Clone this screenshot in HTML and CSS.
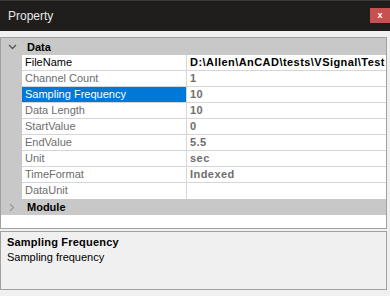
FILE: index.html
```html
<!DOCTYPE html>
<html>
<head>
    <meta charset="UTF-8">
    <title>Property</title>
    <link rel="stylesheet" href="styles.css">
</head>
<body>
    <div class="window">
        <!-- 标题栏 -->
        <div class="titlebar">
            <span class="title">Property</span>
            <span class="close">x</span>
        </div>
        <div class="toolbar"></div>

        <!-- 属性表 -->
        <div class="grid">
            <div class="category">
                <span class="chevron">
                    <svg width="9" height="6" viewBox="0 0 9 6"><path d="M1 1 L4.5 4.5 L8 1" fill="none" stroke="#555" stroke-width="1.3"/></svg>
                </span>
                <span class="cat-name">Data</span>
            </div>
            <div class="row">
                <div class="margin"></div>
                <div class="name editable">FileName</div>
                <div class="value editable">D:\Allen\AnCAD\tests\VSignal\Test</div>
            </div>
            <div class="row">
                <div class="margin"></div>
                <div class="name">Channel Count</div>
                <div class="value">1</div>
            </div>
            <div class="row">
                <div class="margin"></div>
                <div class="name selected">Sampling Frequency</div>
                <div class="value">10</div>
            </div>
            <div class="row">
                <div class="margin"></div>
                <div class="name">Data Length</div>
                <div class="value">10</div>
            </div>
            <div class="row">
                <div class="margin"></div>
                <div class="name">StartValue</div>
                <div class="value">0</div>
            </div>
            <div class="row">
                <div class="margin"></div>
                <div class="name">EndValue</div>
                <div class="value">5.5</div>
            </div>
            <div class="row">
                <div class="margin"></div>
                <div class="name">Unit</div>
                <div class="value">sec</div>
            </div>
            <div class="row">
                <div class="margin"></div>
                <div class="name">TimeFormat</div>
                <div class="value">Indexed</div>
            </div>
            <div class="row last">
                <div class="margin"></div>
                <div class="name">DataUnit</div>
                <div class="value"></div>
            </div>
            <div class="category module">
                <span class="chevron">
                    <svg width="6" height="9" viewBox="0 0 6 9"><path d="M1 1 L4.5 4.5 L1 8" fill="none" stroke="#9a9a9a" stroke-width="1.3"/></svg>
                </span>
                <span class="cat-name">Module</span>
            </div>
        </div>

        <!-- 说明区 -->
        <div class="help">
            <div class="help-title">Sampling Frequency</div>
            <div class="help-text">Sampling frequency</div>
        </div>
    </div>
</body>
</html>
```

FILE: styles.css
```css
body {
    margin: 0;
    background: #f0f0f0;
    font-family: "Liberation Sans", Arial, sans-serif;
    font-size: 11px;
}
.window {
    width: 390px;
    height: 296px;
    overflow: hidden;
}
.titlebar {
    height: 31px;
    background: #1f1e1d;
    border-top: 1px solid #3a3a3a;
    box-sizing: border-box;
    display: flex;
    align-items: flex-start;
    justify-content: space-between;
}
.title {
    color: #e8e8e8;
    font-size: 12px;
    margin: 8px 0 0 8px;
}
.close {
    width: 20px;
    height: 15px;
    margin-top: 7px;
    background: #c75050;
    color: #fff;
    font-weight: bold;
    font-size: 9px;
    line-height: 14px;
    text-align: center;
}
.toolbar {
    height: 6px;
}
.grid {
    width: 387px;
    height: 192px;
    box-sizing: border-box;
    border: 1px solid #a0a0a0;
    background: #fff;
}
.category {
    height: 17px;
    background: #c8c8c8;
    display: flex;
    align-items: center;
}
.category.module {
    height: 16px;
}
.chevron {
    width: 26px;
    display: flex;
    justify-content: center;
    padding-right: 4px;
    box-sizing: border-box;
}
.cat-name {
    font-weight: bold;
    color: #000;
}
.row {
    display: grid;
    grid-template-columns: 21px 165px 1fr;
    height: 16px;
}
.margin {
    background: #c8c8c8;
}
.name {
    border-bottom: 1px solid #d6d6d6;
    border-right: 1px solid #d6d6d6;
    color: #6d6d6d;
    padding-left: 3px;
    line-height: 15px;
    white-space: nowrap;
    overflow: hidden;
}
.name.editable {
    color: #000;
}
.name.selected {
    background: #0078d7;
    color: #fff;
}
.value {
    border-bottom: 1px solid #d6d6d6;
    color: #6d6d6d;
    font-weight: bold;
    letter-spacing: 0.45px;
    padding-left: 3px;
    line-height: 15px;
    white-space: nowrap;
    overflow: hidden;
}
.value.editable {
    color: #000;
}
.row.last .name,
.row.last .value {
    border-bottom: none;
}
.help {
    width: 387px;
    height: 59px;
    margin-top: 2px;
    box-sizing: border-box;
    border: 1px solid #a0a0a0;
    background: #f0f0f0;
    padding: 3px 0 0 6px;
}
.help-title {
    font-weight: bold;
    letter-spacing: 0.2px;
    color: #000;
    line-height: 15px;
}
.help-text {
    color: #000;
    line-height: 15px;
}
```
